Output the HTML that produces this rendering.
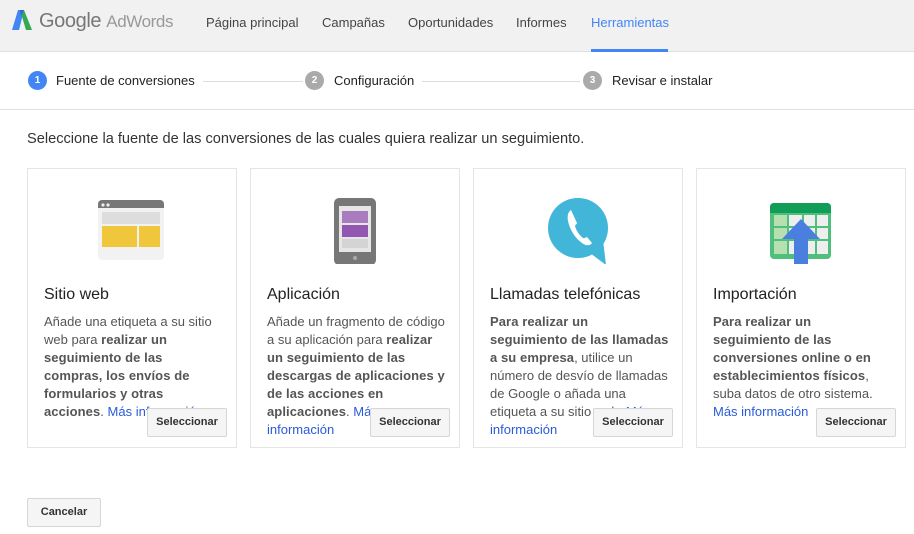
<!DOCTYPE html>
<html><head><meta charset="utf-8"><style>
*{box-sizing:border-box;margin:0;padding:0}
body{width:914px;height:534px;overflow:hidden;background:#fff;font-family:"Liberation Sans",Arial,sans-serif;color:#222;position:relative}
.hdr{position:absolute;left:0;top:0;width:914px;height:52px;background:#f1f1f1;border-bottom:1px solid #e0e0e0}
.logo{position:absolute;left:11px;top:9px}
.gl{position:absolute;left:39px;top:10px;font-size:20px;color:#777;letter-spacing:-0.4px}
.gl span{font-size:17px;color:#999}
.nav{position:absolute;top:15px;font-size:13px;color:#444}
.navsel{color:#4285f4;}
.ul{position:absolute;left:591px;top:49px;width:77px;height:3px;background:#4285f4}
.steps{position:absolute;left:0;top:53px;width:914px;height:57px;border-bottom:1px solid #e0e0e0}
.st{position:absolute;top:18px;width:19px;height:19px;border-radius:50%;color:#fff;font-size:10px;text-align:center;line-height:19px;font-weight:bold}
.sl{position:absolute;top:20px;font-size:13px;color:#222}
.ln{position:absolute;top:28px;height:1px;background:#ddd}
.intro{position:absolute;left:27px;top:131px;font-size:14.6px;color:#333}
.card{position:absolute;top:168px;width:210px;height:280px;border:1px solid #e5e5e5}
.card h3{position:absolute;left:16px;top:117px;font-size:16px;font-weight:normal;color:#222}
.card p{position:absolute;left:16px;top:144px;white-space:nowrap;font-size:13px;line-height:18px;color:#555}
.card b{color:#555;letter-spacing:0.08px}
.card a{color:#2a5bd7;text-decoration:none}
.btn{position:absolute;left:119px;top:239px;width:80px;height:29px;background:#f5f5f5;border:1px solid #d6d6d6;font-size:11px;font-weight:bold;color:#333;text-align:center;line-height:27px;border-radius:2px}
.ic{position:absolute;top:25px;left:0;width:210px;height:70px}
.cancel{position:absolute;left:27px;top:498px;width:74px;height:29px;background:#f5f5f5;border:1px solid #d6d6d6;font-size:11px;font-weight:bold;color:#333;text-align:center;line-height:27px;border-radius:2px}
</style></head><body>
<div class="hdr">
<svg class="logo" width="22" height="22" viewBox="0 0 22 22"><path d="M7 1h6l-5 20H1z" fill="#4285f4"/><path d="M9 1h4l8 20h-6z" fill="#34a853"/><path d="M9 1h4l-3 6z" fill="#3367d6"/></svg>
<div class="gl">Google <span>AdWords</span></div>
<div class="nav" style="left:206px">Página principal</div>
<div class="nav" style="left:322px">Campañas</div>
<div class="nav" style="left:408px">Oportunidades</div>
<div class="nav" style="left:516px">Informes</div>
<div class="nav navsel" style="left:591px">Herramientas</div>
<div class="ul"></div>
</div>
<div class="steps">
<div class="st" style="left:28px;background:#4285f4">1</div><div class="sl" style="left:56px">Fuente de conversiones</div>
<div class="ln" style="left:203px;width:100px"></div>
<div class="st" style="left:305px;background:#aaa">2</div><div class="sl" style="left:334px">Configuración</div>
<div class="ln" style="left:422px;width:158px"></div>
<div class="st" style="left:583px;background:#aaa">3</div><div class="sl" style="left:612px">Revisar e instalar</div>
</div>
<div class="intro">Seleccione la fuente de las conversiones de las cuales quiera realizar un seguimiento.</div>

<div class="card" style="left:27px">
<svg class="ic" viewBox="0 0 210 70"><rect x="70" y="6" width="66" height="60" rx="4" fill="#f2f2f2"/><path d="M74 6h58a4 4 0 0 1 4 4v4H70v-4a4 4 0 0 1 4-4z" fill="#777"/><circle cx="75" cy="11" r="1.6" fill="#eee"/><circle cx="80" cy="11" r="1.6" fill="#eee"/><rect x="74" y="18" width="58" height="12" fill="#ddd"/><rect x="74" y="32" width="35" height="21" fill="#f0c63c"/><rect x="111" y="32" width="21" height="21" fill="#f0c63c"/></svg>
<h3>Sitio web</h3>
<p>Añade una etiqueta a su sitio<br>web para <b>realizar un</b><br><b>seguimiento de las</b><br><b>compras, los envíos de</b><br><b>formularios y otras</b><br><b>acciones</b>. <a>Más información</a></p>
<div class="btn">Seleccionar</div></div>

<div class="card" style="left:250px">
<svg class="ic" viewBox="0 0 210 70"><rect x="83" y="4" width="42" height="67" rx="5" fill="#777"/><rect x="88" y="12" width="32" height="46" fill="#e6e6e6"/><rect x="91" y="17" width="26" height="12" fill="#a97cc0"/><rect x="91" y="31" width="26" height="12" fill="#9257b0"/><rect x="91" y="45" width="26" height="9" fill="#d4d4d4"/><circle cx="104" cy="64" r="2" fill="#aaa"/></svg>
<h3>Aplicación</h3>
<p>Añade un fragmento de código<br>a su aplicación para <b>realizar</b><br><b>un seguimiento de las</b><br><b>descargas de aplicaciones y</b><br><b>de las acciones en</b><br><b>aplicaciones</b>. <a>Más</a><br><a>información</a></p>
<div class="btn">Seleccionar</div></div>

<div class="card" style="left:473px">
<svg class="ic" viewBox="0 0 210 70"><circle cx="104" cy="34" r="30" fill="#41b6d9"/><path d="M112 56l20 15-3-25z" fill="#41b6d9"/><path d="M97 16c-3 2-4 6-3 11 2 9 7 17 14 22 4 3 8 3 10 0l-5-6c-1 0-3 2-4 1-4-3-7-8-8-12 0-1 2-2 2-3z" fill="#fff"/></svg>
<h3>Llamadas telefónicas</h3>
<p><b>Para realizar un</b><br><b>seguimiento de las llamadas</b><br><b>a su empresa</b>, utilice un<br>número de desvío de llamadas<br>de Google o añada una<br>etiqueta a su sitio web. <a>Más</a><br><a>información</a></p>
<div class="btn">Seleccionar</div></div>

<div class="card" style="left:696px">
<svg class="ic" viewBox="0 0 210 70"><rect x="73" y="9" width="61" height="56" rx="4" fill="#4fbf7c"/><path d="M77 9h53a4 4 0 0 1 4 4v6H73v-6a4 4 0 0 1 4-4z" fill="#0f9d58"/><g fill="#eee"><rect x="77" y="21" width="13" height="11" fill="#b7dfb0"/><rect x="92" y="21" width="13" height="11"/><rect x="107" y="21" width="11" height="11"/><rect x="120" y="21" width="11" height="11"/><rect x="77" y="34" width="13" height="11" fill="#b7dfb0"/><rect x="92" y="34" width="13" height="11"/><rect x="107" y="34" width="11" height="11"/><rect x="120" y="34" width="11" height="11"/><rect x="77" y="47" width="13" height="13" fill="#b7dfb0"/><rect x="92" y="47" width="13" height="13"/><rect x="107" y="47" width="11" height="13"/><rect x="120" y="47" width="11" height="13"/></g><path d="M104 25l-19 20h12v25h14V45h12z" fill="#4a7fe0"/></svg>
<h3>Importación</h3>
<p><b>Para realizar un</b><br><b>seguimiento de las</b><br><b>conversiones online o en</b><br><b>establecimientos físicos</b>,<br>suba datos de otro sistema.<br><a>Más información</a></p>
<div class="btn">Seleccionar</div></div>

<div class="cancel">Cancelar</div>
</body></html>
